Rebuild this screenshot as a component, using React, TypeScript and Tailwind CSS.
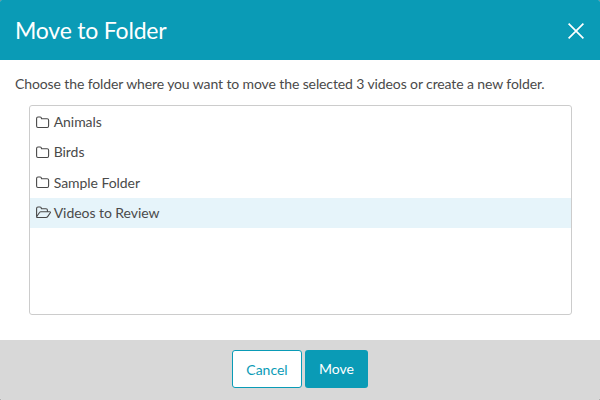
const folders = ['Animals', 'Birds', 'Sample Folder', 'Videos to Review'];

function FolderIcon({ open }: { open: boolean }) {
  return (
    <svg className="relative top-px overflow-visible" width="16" height="14" viewBox="0 0 16 14" fill="none" stroke="#484848" strokeWidth="1.1" strokeLinejoin="round">
      {open ? (
        <>
          <path d="M1.6 10.8V2.4Q1.6 1 3 1H5Q6.4 1 6.4 2.7H11Q12.4 2.7 12.4 4.1V5.7" />
          <path d="M1.7 10.5L4.7 6.3Q5.1 5.7 5.9 5.7H14.5Q16 5.7 15.3 6.8L12.8 10.4Q12.1 11.5 11 11.5H2.6Q1.4 11.5 1.6 10.6" />
        </>
      ) : (
        <path d="M1.6 2.4Q1.6 1 3 1H5.1Q6.5 1 6.5 2.7H12.2Q13.6 2.7 13.6 4.1V10.1Q13.6 11.5 12.2 11.5H3Q1.6 11.5 1.6 10.1Z" />
      )}
    </svg>
  );
}

export default function App() {
  return (
    <div className="bg-[#666]">
      <div className="flex h-[400px] w-[600px] flex-col overflow-hidden rounded-[2px] bg-white font-['Lato',sans-serif] text-[14px] text-[#4a4a4a]">
        <header className="flex h-[60px] items-center justify-between bg-[#0a9bb6] pt-px pr-4 pl-[15px] text-white">
          <h1 className="text-[23px] leading-none tracking-[-0.2px]">Move to Folder</h1>
          <svg width="16" height="16" viewBox="0 0 16 16" stroke="white" strokeWidth="1.7">
            <path d="M0.6 0.6L15.4 15.4M15.4 0.6L0.6 15.4" />
          </svg>
        </header>
        <main className="h-[280px] pt-[14px]">
          <p className="pl-[15px] leading-5 tracking-[-0.11px] whitespace-nowrap">Choose the folder where you want to move the selected 3 videos or create a new folder.</p>
          <ul className="mt-[11px] ml-[29px] h-[210px] w-[543px] rounded-[3px] border border-[#ccc] pt-px tracking-[-0.05px]">
            {folders.map((name, i) => (
              <li key={name} className={`flex h-[30.3px] items-center gap-[2.7px] pb-[1.3px] pl-[5px] ${i === 3 ? 'bg-[#e6f4fa]' : ''}`}>
                <FolderIcon open={i === 3} />
                {name}
              </li>
            ))}
          </ul>
        </main>
        <footer className="flex h-[60px] items-center justify-center gap-[3px] bg-[#d8d8d8] pb-0.5">
          <button className="h-[38px] w-[70px] rounded-[3px] border border-[#0a9bb6] bg-white text-[#0a9bb6]">Cancel</button>
          <button className="h-[38px] w-[63px] rounded-[3px] bg-[#0a9bb6] pb-0.5 text-white">Move</button>
        </footer>
      </div>
    </div>
  );
}
